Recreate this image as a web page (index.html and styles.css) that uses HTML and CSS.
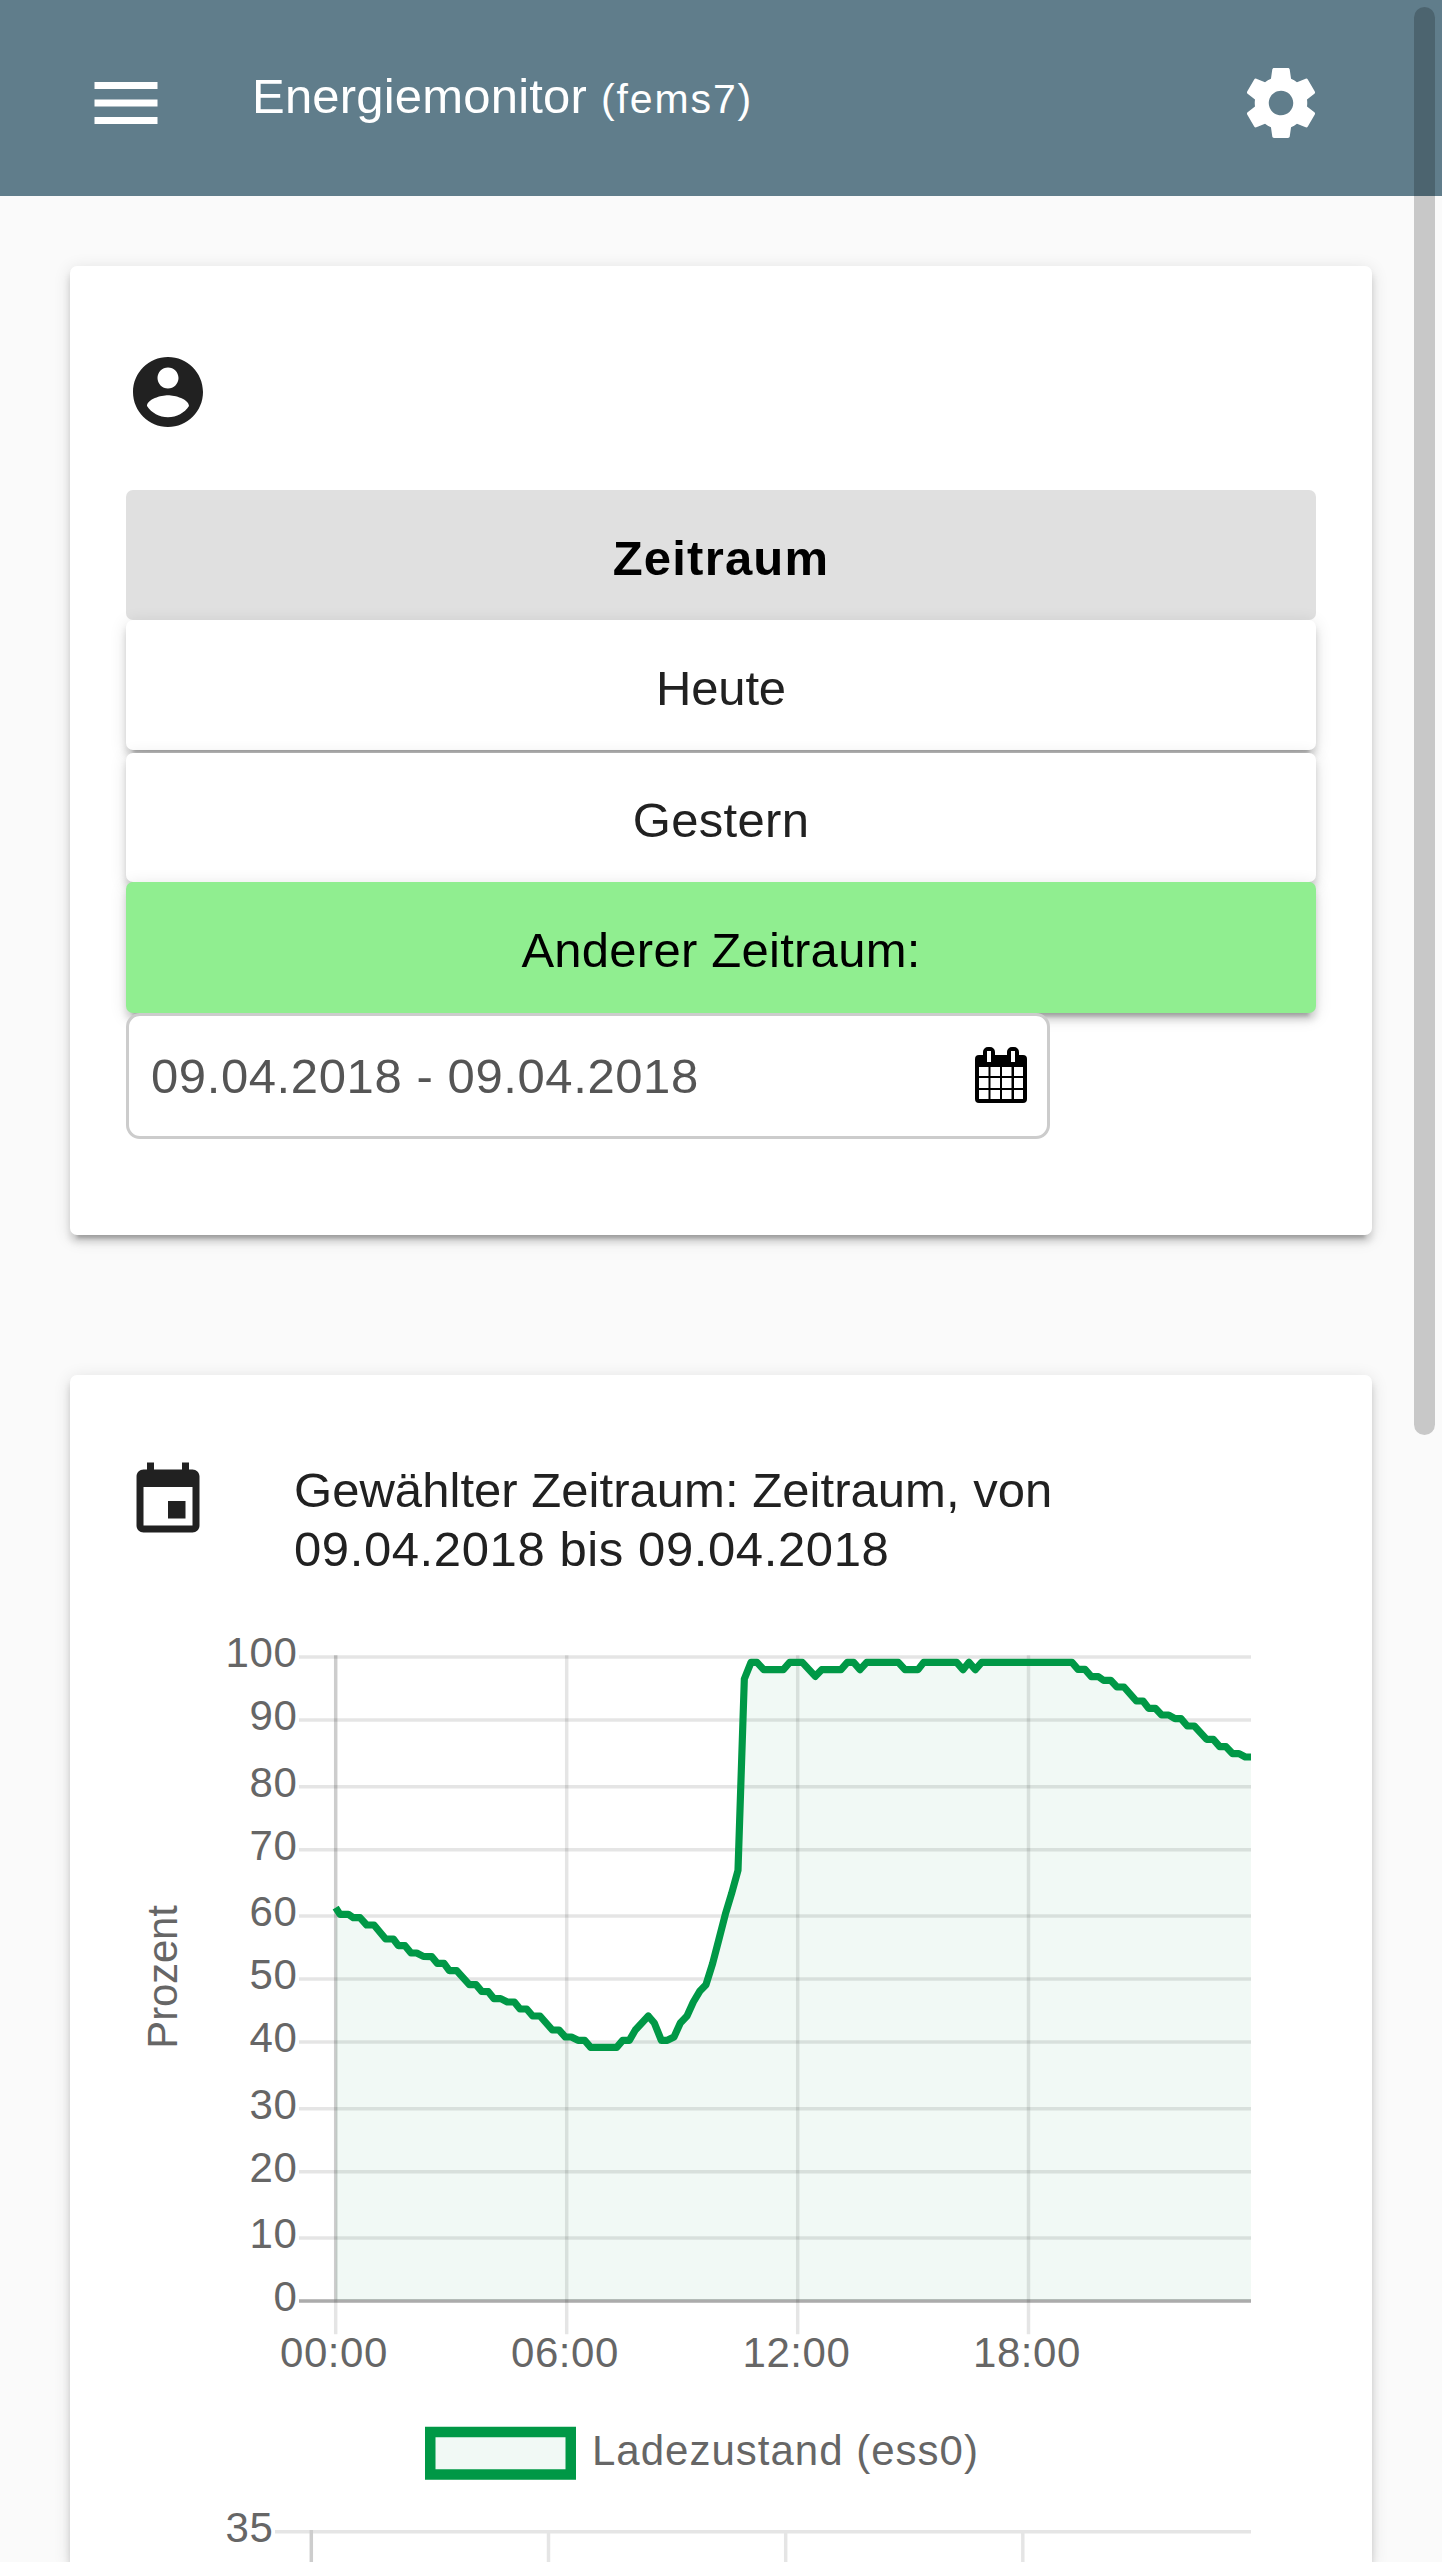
FILE: index.html
```html
<!DOCTYPE html>
<html lang="de">
<head>
<meta charset="utf-8">
<title>Energiemonitor</title>
<link rel="stylesheet" href="styles.css">
</head>
<body>
<header class="toolbar">
  <svg class="icon" viewBox="0 0 24 24"><path d="M3 18h18v-2H3v2zm0-5h18v-2H3v2zm0-7v2h18V6H3z"/></svg>
  <h1 class="title">Energiemonitor <small class="device">(fems7)</small></h1>
  <svg class="icon" viewBox="0 0 24 24"><path d="M19.43 12.98c.04-.32.07-.64.07-.98s-.03-.66-.07-.98l2.11-1.65c.19-.15.24-.42.12-.64l-2-3.46c-.12-.22-.39-.3-.61-.22l-2.49 1c-.52-.4-1.08-.73-1.69-.98l-.38-2.65C14.46 2.18 14.25 2 14 2h-4c-.25 0-.46.18-.49.42l-.38 2.65c-.61.25-1.17.59-1.69.98l-2.49-1c-.23-.09-.49 0-.61.22l-2 3.46c-.13.22-.07.49.12.64l2.11 1.65c-.04.32-.07.65-.07.98s.03.66.07.98l-2.11 1.65c-.19.15-.24.42-.12.64l2 3.46c.12.22.39.3.61.22l2.49-1c.52.4 1.08.73 1.69.98l.38 2.65c.03.24.24.42.49.42h4c.25 0 .46-.18.49-.42l.38-2.65c.61-.25 1.17-.59 1.69-.98l2.49 1c.23.09.49 0 .61-.22l2-3.46c.12-.22.07-.49-.12-.64l-2.11-1.65zM12 15.5c-1.93 0-3.5-1.57-3.5-3.5s1.57-3.5 3.5-3.5 3.5 1.57 3.5 3.5-1.57 3.5-3.5 3.5z"/></svg>
</header>

<main class="content">
  <section class="card period">
    <svg class="icon account" viewBox="0 0 24 24"><path d="M12 2C6.48 2 2 6.48 2 12s4.48 10 10 10 10-4.480 10-10S17.520 2 12 2zm0 3c1.660 0 3 1.340 3 3s-1.340 3-3 3-3-1.340-3-3 1.340-3 3-3zm0 14.200c-2.500 0-4.710-1.280-6-3.220.030-1.990 4-3.080 6-3.080 1.990 0 5.970 1.090 6 3.080-1.290 1.940-3.500 3.220-6 3.220z"/></svg>
    <div class="btn btn-head">Zeitraum</div>
    <div class="btn btn-today">Heute</div>
    <div class="btn btn-yesterday">Gestern</div>
    <div class="btn btn-active">Anderer Zeitraum:</div>
    <div class="daterange">
      <span>09.04.2018 - 09.04.2018</span>
      <svg class="calendar" viewBox="0 0 52 56">
        <path fill-rule="evenodd" d="M4 8H8V5a5 5 0 0 1 5-5h2a5 5 0 0 1 5 5V8H32V5a5 5 0 0 1 5-5h2a5 5 0 0 1 5 5V8H48a4 4 0 0 1 4 4V52a4 4 0 0 1-4 4H4a4 4 0 0 1-4-4V12a4 4 0 0 1 4-4zM12 4V15h4V4zM36 4V15h4V4zM4 20V29h9.500V20zM15.500 20V29H25V20zM27 20V29h9.500V20zM39 20V29h9V20zM4 31V41h9.500V31zM15.500 31V41H25V31zM27 31V41h9.500V31zM39 31V41h9V31zM4 43V52h9.500V43zM15.500 43V52H25V43zM27 43V52h9.500V43zM39 43V52h9V43z"/>
      </svg>
    </div>
  </section>

  <section class="card history">
    <div class="history-head">
      <svg class="icon" viewBox="0 0 24 24"><path d="M17 12h-5v5h5v-5zM16 1v2H8V1H6v2H5c-1.110 0-1.990.9-1.990 2L3 19c0 1.100.890 2 2 2h14c1.100 0 2-.9 2-2V5c0-1.100-.9-2-2-2h-1V1h-2zm3 18H5V8h14v11z"/></svg>
      <p class="summary">Gewählter Zeitraum: Zeitraum, von<br><span class="dates">09.04.2018 bis 09.04.2018</span></p>
    </div>
    <svg class="charts" viewBox="126 1600 1190 962">
      <!-- state of charge -->
      <g class="grid">
        <path d="M299 1657H1251M299 1720H1251M299 1786.700H1251M299 1849.700H1251M299 1916H1251M299 1979H1251M299 2042H1251M299 2108.700H1251M299 2171.700H1251M299 2238H1251"/>
        <path d="M335.700 1655.300V2334.300M566.700 1655.300V2334.300M797.700 1655.300V2334.300M1028.500 1655.300V2334.300"/>
        <path d="M335.700 1655.300V2301M299 2301H1251"/>
        <path class="zero" d="M299 2301H1251"/>
      </g>
      <g transform="translate(500 1640) scale(.33333)">
        <path class="area" d="M-493 808L-480 823-455 823-440 833-420 833-400 855-378 855-343 897-320 897-305 917-285 917-267 939-250 939-230 949-205 950-188 970-168 970-152 992-130 992-92 1034-72 1034-55 1054-35 1055-18 1076 2 1076 22 1086 43 1086 60 1107 80 1107 98 1128 120 1128 157 1170 177 1170 196 1191 214 1191 234 1201 254 1201 272 1222 350 1222 368 1201 388 1201 406 1170 445 1128 463 1149 484 1201 502 1201 522 1191 541 1149 561 1128 580 1086 599 1054 618 1034 638 970 657 897 676 823 695 760 714 691 733 117 753 67 771 67 791 89 850 89 869 67 907 67 946 109 965 89 1023 89 1042 67 1061 67 1080 89 1100 67 1195 67 1215 89 1254 89 1271 67 1370 67 1389 89 1407 67 1426 89 1445 67 1716 67 1734 88 1755 88 1774 110 1795 110 1811 121 1832 121 1851 141 1872 141 1909 183 1929 183 1946 205 1966 205 1985 225 2006 225 2025 236 2043 236 2062 258 2083 258 2120 298 2140 298 2159 320 2178 320 2198 341 2217 341 2236 351 2253 351V1980H-493z"/>
        <path class="line" d="M-493 803L-480 823-455 823-440 833-420 833-400 855-378 855-343 897-320 897-305 917-285 917-267 939-250 939-230 949-205 950-188 970-168 970-152 992-130 992-92 1034-72 1034-55 1054-35 1055-18 1076 2 1076 22 1086 43 1086 60 1107 80 1107 98 1128 120 1128 157 1170 177 1170 196 1191 214 1191 234 1201 254 1201 272 1222 350 1222 368 1201 388 1201 406 1170 445 1128 463 1149 484 1201 502 1201 522 1191 541 1149 561 1128 580 1086 599 1054 618 1034 638 970 657 897 676 823 695 760 714 691 733 117 753 67 771 67 791 89 850 89 869 67 907 67 946 109 965 89 1023 89 1042 67 1061 67 1080 89 1100 67 1195 67 1215 89 1254 89 1271 67 1370 67 1389 89 1407 67 1426 89 1445 67 1716 67 1734 88 1755 88 1774 110 1795 110 1811 121 1832 121 1851 141 1872 141 1909 183 1929 183 1946 205 1966 205 1985 225 2006 225 2025 236 2043 236 2062 258 2083 258 2120 298 2140 298 2159 320 2178 320 2198 341 2217 341 2236 351 2253 351"/>
      </g>
      <g class="label end">
        <text x="297.500" y="1666.500">100</text>
        <text x="297.500" y="1730">90</text>
        <text x="297.500" y="1796.500">80</text>
        <text x="297.500" y="1859.500">70</text>
        <text x="297.500" y="1926">60</text>
        <text x="297.500" y="1989">50</text>
        <text x="297.500" y="2052">40</text>
        <text x="297.500" y="2118.500">30</text>
        <text x="297.500" y="2182">20</text>
        <text x="297.500" y="2248">10</text>
        <text x="297.500" y="2311">0</text>
      </g>
      <g class="label middle">
        <text x="334" y="2367">00:00</text>
        <text x="565" y="2367">06:00</text>
        <text x="796.500" y="2367">12:00</text>
        <text x="1027" y="2367">18:00</text>
        <text class="axis" transform="translate(176.700 1977) rotate(-90)">Prozent</text>
      </g>
      <rect class="legend" x="430.250" y="2432" width="140.500" height="42.500"/>
      <text class="label legend-text" x="592" y="2465">Ladezustand (ess0)</text>
      <!-- energy -->
      <g class="grid">
        <path d="M275 2531.700H1251M311.300 2530V2562M548.500 2530V2562M785.700 2530V2562M1022.800 2530V2562"/>
        <path d="M311.300 2530V2562"/>
      </g>
      <text class="label end" x="273.500" y="2541.700">35</text>
    </svg>
  </section>
</main>
<div class="scroll-thumb"></div>
</body>
</html>
```

FILE: styles.css
```css
* { box-sizing: border-box; }

body {
  margin: 0;
  height: 2562px;
  overflow: hidden;
  position: relative;
  background: #fafafa;
  color: #212121;
  font: 49px/59px "Liberation Sans", Arial, sans-serif;
}

.icon { display: block; flex: none; width: 84px; height: 84px; fill: currentColor; }

.toolbar {
  display: flex;
  align-items: center;
  height: 196px;
  padding: 10px 119px 0 84px;
  background: #607d8b;
  color: #fff;
}

.title {
  flex: 1;
  margin: 0 0 11px 84px;
  font-size: 49px;
  font-weight: 400;
  letter-spacing: .2px;
  white-space: nowrap;
}

.device { font-size: 41px; letter-spacing: 1.9px; }

.content { display: flex; flex-direction: column; gap: 140px; padding: 70px 70px 0; }

.card {
  padding: 84px 56px 0;
  border-radius: 7px;
  background: #fff;
  box-shadow: 0 10.5px 3.5px -7px rgba(0, 0, 0, .2), 0 7px 7px rgba(0, 0, 0, .14), 0 3.5px 17.5px rgba(0, 0, 0, .12);
}

.period { height: 969px; }
.account { margin-bottom: 56px; }

.btn {
  display: flex;
  align-items: center;
  justify-content: center;
  height: 130px;
  padding-top: 6px;
  border-radius: 7px;
  background: #fff;
  box-shadow: 0 10.5px 3.5px -7px rgba(0, 0, 0, .2), 0 7px 7px rgba(0, 0, 0, .14), 0 3.5px 17.5px rgba(0, 0, 0, .12);
}

.btn-head { background: #e0e0e0; color: #000; font-weight: 700; letter-spacing: 1.2px; box-shadow: none; }
.btn-today { letter-spacing: -.2px; }
.btn-yesterday { height: 129px; margin-top: 3px; letter-spacing: .3px; }
.btn-active { height: 131px; background: #90ee90; color: #000; letter-spacing: .25px; }

.daterange {
  display: flex;
  align-items: center;
  justify-content: space-between;
  width: 924px;
  height: 126px;
  padding: 0 20px 0 22px;
  border: 3.5px solid #ccc;
  border-radius: 14px;
  background: #fff;
  color: #555;
  letter-spacing: .6px;
}

.calendar { width: 52px; height: 56px; margin-bottom: 2px; fill: #000; }

.history { height: 1187px; border-radius: 7px 7px 0 0; }
.history-head { display: flex; }
.summary { margin: -21px 0 0 84px; padding-top: 23px; letter-spacing: .04px; white-space: nowrap; }
.dates { letter-spacing: .6px; }

.charts { display: block; width: 1190px; height: 962px; margin-top: 21px; }
.grid path { fill: none; stroke: rgba(0, 0, 0, .1); stroke-width: 3.5px; }
.grid .zero { stroke: rgba(0, 0, 0, .25); }
.area { fill: rgba(0, 152, 70, .055); }
.line { fill: none; stroke: #009846; stroke-width: 21.5px; stroke-linejoin: round; }
.label { fill: #666; font-size: 42px; letter-spacing: .6px; }
.end { text-anchor: end; }
.middle { text-anchor: middle; }
.label .axis { letter-spacing: -.2px; }
.legend { fill: rgba(0, 152, 70, .055); stroke: #009846; stroke-width: 10.5px; }
.legend-text { letter-spacing: 1px; }

.scroll-thumb {
  position: absolute;
  top: 7px;
  right: 7px;
  width: 21px;
  height: 1428px;
  border-radius: 10.5px;
  background: rgba(0, 0, 0, .2);
}
```
